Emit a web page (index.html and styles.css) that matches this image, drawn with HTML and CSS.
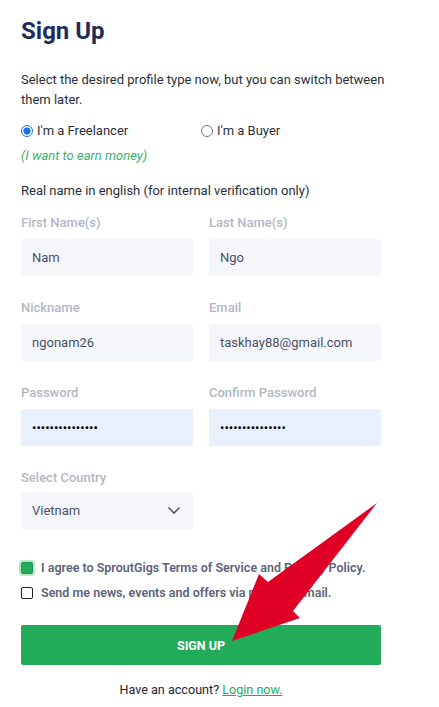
FILE: index.html
```html
<!DOCTYPE html>
<html>
<head>
<meta charset="utf-8">
<link rel="stylesheet" href="styles.css">
</head>
<body>
<div class="page">
  <h1 class="title">Sign Up</h1>
  <p class="intro">Select the desired profile type now, but you can switch between them later.</p>
  <div class="radios">
    <label class="radio"><span class="dot dot-on"></span>I'm a Freelancer</label>
    <label class="radio"><span class="dot"></span>I'm a Buyer</label>
  </div>
  <p class="earn">(I want to earn money)</p>
  <p class="realname">Real name in english (for internal verification only)</p>
  <div class="grid">
    <div class="field"><div class="label">First Name(s)</div><div class="input">Nam</div></div>
    <div class="field"><div class="label">Last Name(s)</div><div class="input">Ngo</div></div>
    <div class="field"><div class="label">Nickname</div><div class="input">ngonam26</div></div>
    <div class="field"><div class="label">Email</div><div class="input">taskhay88@gmail.com</div></div>
    <div class="field"><div class="label">Password</div><input class="input pw" type="password" value="123456789012345" readonly></div>
    <div class="field"><div class="label">Confirm Password</div><input class="input pw" type="password" value="123456789012345" readonly></div>
    <div class="field"><div class="label label-tight">Select Country</div><div class="input select">Vietnam<svg class="chev" width="14" height="9" viewBox="0 0 14 9"><path d="M1.5 1.5 L7 7 L12.5 1.5" fill="none" stroke="#525a70" stroke-width="1.6"/></svg></div></div>
  </div>
  <div class="checks">
    <label class="check"><span class="box box-on"></span>I agree to SproutGigs Terms of Service and Privacy Policy.</label>
    <label class="check"><span class="box"></span>Send me news, events and offers via periodic email.</label>
  </div>
  <button class="btn">SIGN UP</button>
  <p class="login">Have an account? <a href="#">Login now.</a></p>
</div>
<svg class="arrow" width="439" height="707" viewBox="0 0 439 707">
  <polygon points="377,503 293,611 300,618 232,641 259,574 268,582" fill="#e00025"/>
</svg>
</body>
</html>
```
FILE: styles.css
```css
html, body { margin: 0; padding: 0; background: #fff; }
body { font-family: Roboto, "Liberation Sans", sans-serif; color: #2b2f3a; width: 439px; height: 707px; overflow: hidden; position: relative; }
.page { padding: 0 0 0 21px; width: 360px; }
.title { margin: 0; padding-top: 15px; font-size: 24px; font-weight: 700; color: #1e2d5c; line-height: 32px; }
.intro { margin: 23px 0 0; width: 380px; font-size: 13px; line-height: 20px; color: #2b2f3a; }
.radios { display: flex; margin-top: 11px; font-size: 13px; line-height: 20px; }
.radio { display: flex; align-items: center; width: 188px; }
.dot { width: 12px; height: 12px; border: 1px solid #767676; border-radius: 50%; margin-right: 4px; box-sizing: border-box; display: inline-block; background: #fff; }
.dot-on { border: 1.5px solid #1a73e8; background: radial-gradient(circle, #1a73e8 0 3.3px, #fff 3.9px); }
.earn { margin: 5px 0 0; font-size: 13px; line-height: 20px; font-style: italic; color: #3db26b; }
.realname { margin: 15px 0 0; font-size: 13px; line-height: 20px; }
.grid { display: grid; grid-template-columns: 172px 172px; column-gap: 16px; row-gap: 24px; margin-top: 14px; }
.label { font-size: 13px; line-height: 16px; font-weight: 500; color: #b3b7c4; margin-bottom: 8px; }
.label-tight { margin-bottom: 6px; }
.input { box-sizing: border-box; display: flex; align-items: center; width: 172px; height: 37px; background: #f5f6fa; padding: 0 11px; font-size: 13px; color: #4a5168; border: 0; border-radius: 1px; font-family: Roboto, "Liberation Sans", sans-serif; }
.pw { background: #e8f0fe; color: #000; outline: none; letter-spacing: 0; font-size: 13px; }
.select { justify-content: space-between; padding-right: 12px; }
.checks { margin-top: 30px; display: flex; flex-direction: column; gap: 8px; }
.check { display: flex; align-items: center; font-size: 12.5px; font-weight: 600; color: #5d6377; line-height: 17px; }
.box { box-sizing: border-box; width: 12px; height: 12px; border: 1px solid #222; border-radius: 2px; margin-right: 8px; background: #fff; }
.box-on { background: #22ab59; border-color: #2a8f54; box-shadow: 0 0 0 2px #b6e8c9; }
.btn { display: block; margin-top: 24px; width: 360px; height: 40px; border: 0; border-radius: 2px; background: #22ab59; color: #fff; font-family: Roboto, "Liberation Sans", sans-serif; font-weight: 700; font-size: 12.5px; }
.login { margin: 17px 0 0; text-align: center; font-size: 12.6px; color: #1f2330; }
.login a { color: #22ab59; text-decoration: underline; }
.arrow { position: absolute; left: 0; top: 0; pointer-events: none; }
```
